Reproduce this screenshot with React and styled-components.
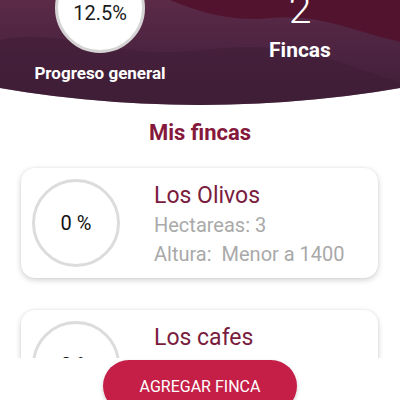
import React from "react";
import styled, { createGlobalStyle } from "styled-components";

const fincas = [
  { name: "Los Olivos", progress: 0, hectareas: 3, altura: "Menor a 1400" },
  { name: "Los cafes", progress: 0, hectareas: 2, altura: "Menor a 1400" },
];

export default function App() {
  return (
    <Page>
      <GlobalStyle />
      <Header>
        <Waves viewBox="0 0 400 105" preserveAspectRatio="none">
          <path
            d="M170 0 C200 12 230 22 270 18 C320 14 350 30 400 42 L400 0 Z"
            fill="#52132f"
          />
          <path
            d="M0 40 C40 30 90 45 130 50 C190 58 230 40 290 50 C340 58 370 75 400 82 L400 105 L0 105 Z"
            fill="#3f1e36"
            opacity="0.55"
          />
        </Waves>
        <HeaderGrid>
          <Stat>
            <Ring>12.5%</Ring>
            <StatLabel>Progreso general</StatLabel>
          </Stat>
          <Stat>
            <Count>2</Count>
            <CountLabel>Fincas</CountLabel>
          </Stat>
        </HeaderGrid>
      </Header>

      <SectionTitle>Mis fincas</SectionTitle>

      <List>
        {fincas.map((f) => (
          <Card key={f.name}>
            <CardRing>{f.progress} %</CardRing>
            <Info>
              <Name>{f.name}</Name>
              <Detail>Hectareas: {f.hectareas}</Detail>
              <Detail>Altura:&nbsp; {f.altura}</Detail>
            </Info>
          </Card>
        ))}
      </List>

      <Footer>
        <AddButton>AGREGAR FINCA</AddButton>
      </Footer>
    </Page>
  );
}

const GlobalStyle = createGlobalStyle`
  html, body {
    margin: 0;
    padding: 0;
    background: #fff;
    overflow: hidden;
  }
  body {
    font-family: Roboto, "Liberation Sans", sans-serif;
  }
`;

const Page = styled.div`
  display: flex;
  flex-direction: column;
  width: 400px;
  height: 400px;
  overflow: hidden;
  background: #fff;
`;

const Header = styled.header`
  position: relative;
  flex-shrink: 0;
  height: 105px;
  background: linear-gradient(180deg, #5b2a47 0%, #4a2340 55%, #3d1e36 100%);
  clip-path: circle(1185px at 50% -1080px);
`;

const Waves = styled.svg`
  position: absolute;
  inset: 0;
  width: 100%;
  height: 100%;
`;

const HeaderGrid = styled.div`
  position: relative;
  display: grid;
  grid-template-columns: 1fr 1fr;
`;

const Stat = styled.div`
  display: flex;
  flex-direction: column;
  align-items: center;
  color: #fff;
`;

const Ring = styled.div`
  display: flex;
  align-items: center;
  justify-content: center;
  box-sizing: border-box;
  width: 90px;
  height: 90px;
  margin-top: -37px;
  padding-top: 10px;
  border-radius: 50%;
  border: 3px solid #d6d3d5;
  background: #fff;
  color: #1a1a1a;
  font-size: 20px;
`;

const StatLabel = styled.div`
  margin-top: 10px;
  font-size: 17px;
  line-height: 20px;
  font-weight: 700;
`;

const Count = styled.div`
  margin-top: -13px;
  font-size: 41px;
  line-height: 44px;
  font-weight: 300;
`;

const CountLabel = styled.div`
  margin-top: 7px;
  font-size: 21px;
  line-height: 24px;
  font-weight: 700;
`;

const SectionTitle = styled.h2`
  margin: 15px 0 0;
  text-align: center;
  font-size: 22px;
  line-height: 26px;
  font-weight: 700;
  color: #85193c;
`;

const List = styled.div`
  flex: 1;
  min-height: 0;
  overflow: hidden;
  display: flex;
  flex-direction: column;
  gap: 32px;
  padding: 22px 22px 0 21px;
`;

const Card = styled.div`
  display: flex;
  align-items: center;
  flex-shrink: 0;
  height: 110px;
  box-sizing: border-box;
  padding: 0 11px;
  border-radius: 14px;
  background: #fff;
  box-shadow: 0 2px 6px rgba(0, 0, 0, 0.18), 0 0 2px rgba(0, 0, 0, 0.08);
`;

const CardRing = styled.div`
  display: flex;
  align-items: center;
  justify-content: center;
  flex-shrink: 0;
  box-sizing: border-box;
  width: 88px;
  height: 88px;
  border-radius: 50%;
  border: 3px solid #dcdcdc;
  color: #111;
  font-size: 20px;
`;

const Info = styled.div`
  display: flex;
  flex-direction: column;
  margin-left: 34px;
  padding-top: 2px;
`;

const Name = styled.div`
  font-size: 23px;
  line-height: 31px;
  color: #7a1c3e;
`;

const Detail = styled.div`
  font-size: 20px;
  line-height: 29px;
  color: #a9a9a9;
`;

const Footer = styled.div`
  flex-shrink: 0;
  height: 40px;
  display: flex;
  justify-content: center;
  padding-top: 2px;
  background: #fff;
`;

const AddButton = styled.button`
  flex-shrink: 0;
  width: 194px;
  height: 52px;
  border: none;
  border-radius: 26px;
  background: #c51f48;
  color: #fff;
  font-family: Roboto, "Liberation Sans", sans-serif;
  font-size: 16px;
  padding: 0;
  box-shadow: 0 2px 4px rgba(0, 0, 0, 0.2);
`;
